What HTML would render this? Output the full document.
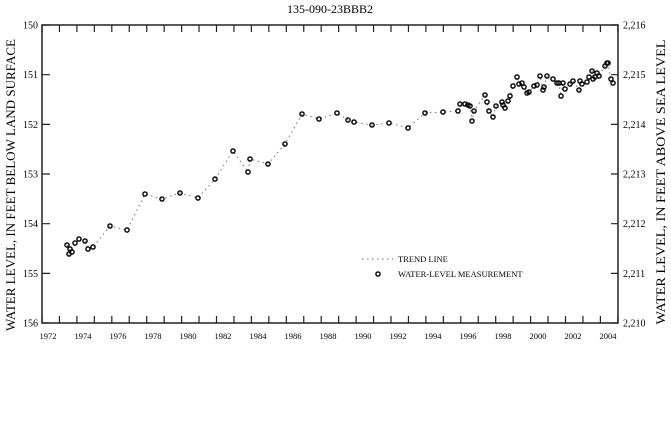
<!DOCTYPE html>
<html><head><style>
html,body{margin:0;padding:0;background:#fff;}
svg{display:block;font-family:"Liberation Serif",serif;}
</style></head><body>
<svg width="671" height="422" viewBox="0 0 671 422" xmlns="http://www.w3.org/2000/svg">
<text x="330" y="13" font-size="12" text-anchor="middle">135-090-23BBB2</text>
<g stroke="#222" stroke-width="1.5" fill="none">
<rect x="42" y="25" width="576" height="298"/>
</g>
<g id="ticks" stroke="#222" stroke-width="1.2">
<path id="tk" d=""/>
</g>
<g font-size="10" text-anchor="end" id="yl"></g>
<g font-size="10" id="yr"></g>
<g font-size="8.5" text-anchor="middle" id="xl"></g>
<text transform="translate(15,185) rotate(-90)" font-size="12.5" text-anchor="middle" textLength="292" lengthAdjust="spacingAndGlyphs">WATER LEVEL, IN FEET BELOW LAND SURFACE</text>
<text transform="translate(665,182) rotate(-90)" font-size="12.5" text-anchor="middle" textLength="285" lengthAdjust="spacingAndGlyphs">WATER LEVEL, IN FEET ABOVE SEA LEVEL</text>
<polyline id="trend" fill="none" stroke="#666" stroke-width="0.9" stroke-dasharray="1.5,3.5" points=""/>
<g id="pts" fill="none" stroke="#000" stroke-width="1.4"></g>
<line x1="362" y1="259" x2="393" y2="259" stroke="#666" stroke-width="0.9" stroke-dasharray="1.5,3.5"/>
<text x="398" y="262" font-size="8.5">TREND LINE</text>
<circle cx="378" cy="274" r="2.1" fill="none" stroke="#000" stroke-width="1.4"/>
<text x="398" y="277" font-size="8.5">WATER-LEVEL MEASUREMENT</text>
</svg>
<script>
var ns="http://www.w3.org/2000/svg";
function el(t,a,txt,p){var e=document.createElementNS(ns,t);for(var k in a)e.setAttribute(k,a[k]);if(txt)e.textContent=txt;document.getElementById(p).appendChild(e);}
var d="";
for(var i=0;i<=33;i++){var x=42+i*17.45;d+="M"+x+" 25v7M"+x+" 323v-7";}
for(var j=0;j<=6;j++){var y=25+j*49.67;d+="M42 "+y+"h8M618 "+y+"h-7";
el("text",{x:38,y:y+3.5},String(150+j),"yl");
el("text",{x:623,y:y+3.5},"2,"+(216-j),"yr");}
document.getElementById("tk").setAttribute("d",d);
for(var k=0;k<=16;k++){el("text",{x:48+k*35,y:339},String(1972+2*k),"xl");}
var P=[[67,245],[70,249],[69,254],[72,252],[75,243],[79,239],[85,241],[88,249],[93,247],[110,226],[127,230],[145,194],[162,199],[180,193],[198,198],[215,179],[233,151],[248,172],[250,159],[268,164],[285,144],[302,114],[319,119],[337,113],[348,120],[354,122],[372,125],[389,123],[408,128],[425,113],[443,112],[458,111],[460,104],[465,104],[468,105],[470,106],[472,121],[474,111],[485,95],[487,102],[489,111],[493,117],[496,106],[502,102],[503,105],[505,108],[508,101],[510,96],[513,86],[517,77],[519,84],[522,83],[524,87],[527,93],[529,92],[534,86],[537,85],[540,76],[543,90],[544,87],[547,76],[553,79],[557,83],[559,83],[561,96],[563,83],[565,89],[570,84],[573,81],[579,90],[580,81],[582,84],[587,82],[589,77],[592,71],[593,79],[595,77],[597,73],[599,76],[605,66],[607,63],[608,63],[611,79],[613,83]];
document.getElementById("trend").setAttribute("points",P.map(function(p){return p.join(",")}).join(" "));
P.forEach(function(p){el("circle",{cx:p[0],cy:p[1],r:2.1},null,"pts");});
</script>
</body></html>
